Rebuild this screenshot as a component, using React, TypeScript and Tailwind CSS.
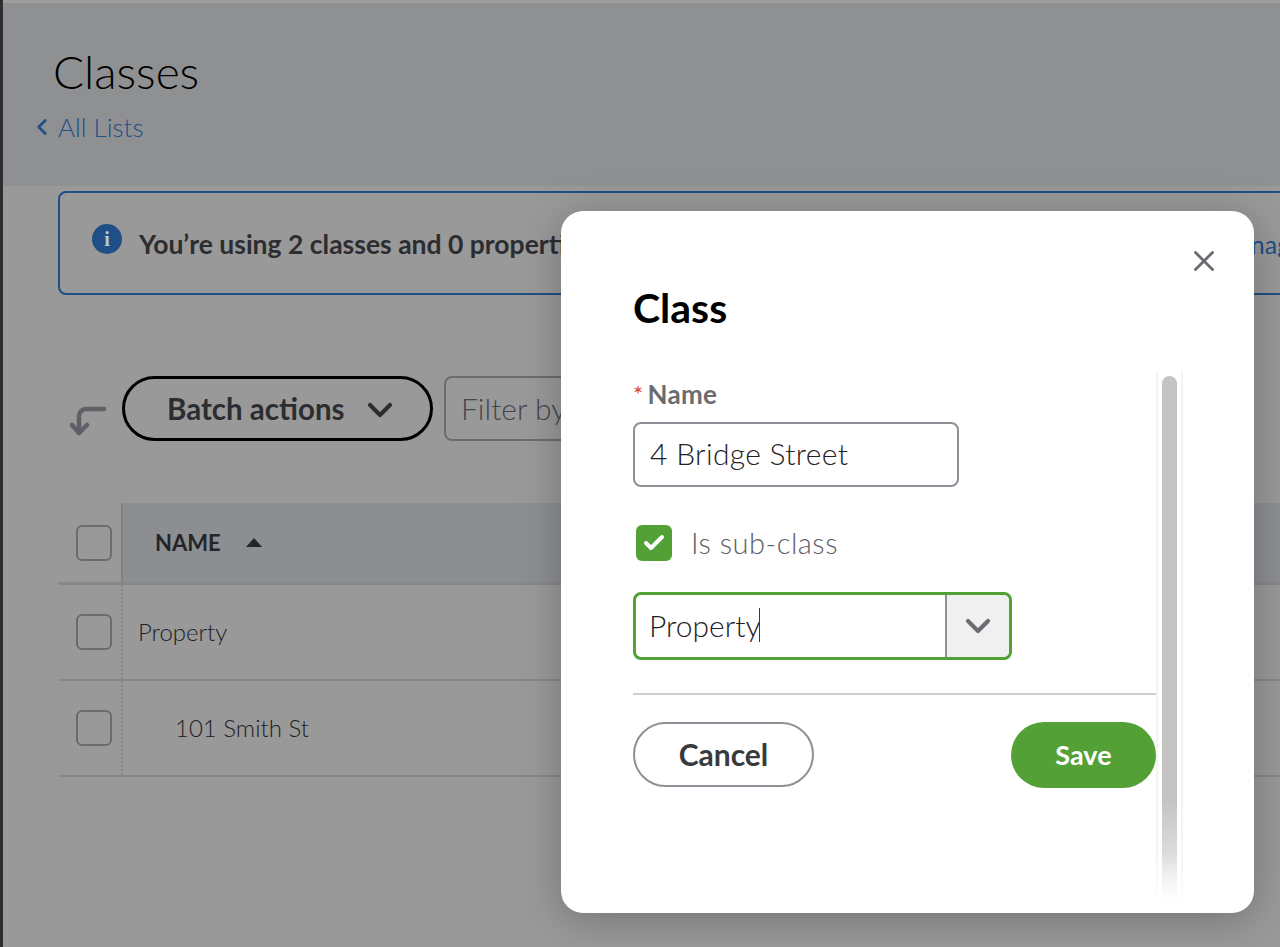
import React from 'react';
import { Check, ChevronDown, ChevronLeft, X } from 'lucide-react';

const Box = () => (
  <div className="w-9 h-9 rounded-md border-2 border-[#6b6c72] shrink-0"></div>
);

const Row = ({ label, indent }: { label: string; indent: string }) => (
  <div className="flex items-center border-b-2 border-[#87888a] w-[1222px] h-[96px]">
    <div className="w-[65px] h-full flex items-center pl-[18px] border-r-2 border-dotted border-[#808184]">
      <Box />
    </div>
    <span className={`text-[24px] font-light text-[#1f2023] ${indent}`}>{label}</span>
  </div>
);

const ClassModal = () => (
  <div className="absolute left-[558px] top-[211px] w-[693px] h-[702px] bg-white rounded-[22px] shadow-[0_6px_40px_rgba(0,0,0,0.25)] pl-[72px] pr-[70px] flex flex-col">
    <button className="absolute top-[33px] right-[33px] text-[#6b6c72]">
      <X size={34} strokeWidth={2} />
    </button>
    <h2 className="mt-[72px] text-[41px] leading-[50px] font-bold text-black">Class</h2>

    <div className="flex mt-[38px] flex-1 min-h-0 pb-[6px]">
      <div className="w-[523px] shrink-0">
        <label className="flex items-center h-[30px] mt-[8px] text-[26px] tracking-[0.3px] leading-none font-bold text-[#6b6c72]">
          <span className="text-[#d8432b] font-normal mr-[4px] text-[24px] leading-none">*</span>
          Name
        </label>
        <div className="mt-[13px] w-[326px] h-[65px] rounded-lg border-2 border-[#8d9096] flex items-center pl-[15px] pb-[2px] text-[30px] font-light tracking-[0.3px] text-[#1f2023]">
          4 Bridge Street
        </div>

        <div className="flex items-center mt-[38px] ml-[3px] h-[36px]">
          <div className="w-9 h-9 rounded-md bg-[#53a036] flex items-center justify-center">
            <Check size={24} strokeWidth={4} className="text-white" />
          </div>
          <span className="ml-[19px] text-[29px] font-light tracking-[0.5px] text-[#5f6166]">Is sub-class</span>
        </div>

        <div className="mt-[31px] w-[379px] h-[68px] rounded-lg border-[3px] border-[#53a036] flex">
          <div className="flex-1 flex items-center pl-[13px] pb-[2px] text-[30px] font-light text-[#1f2023]">
            Property<span className="w-px h-[34px] bg-[#393a3d] -ml-[2px]"></span>
          </div>
          <div className="w-[64px] border-l-2 border-[#8d9096] bg-[#f0f0f0] rounded-r-md flex items-center justify-center text-[#6b6c72]">
            <ChevronDown size={40} strokeWidth={2.5} />
          </div>
        </div>

        <div className="mt-[33px] border-t-2 border-[#cfcfcf]"></div>

        <div className="flex justify-between mt-[27px]">
          <button className="w-[181px] h-[65px] rounded-full border-2 border-[#8d9096] text-[30px] font-bold text-[#393a3d]">
            Cancel
          </button>
          <button className="w-[145px] h-[66px] rounded-full bg-[#53a036] text-[27px] font-bold text-white">
            Save
          </button>
        </div>
      </div>

      <div className="w-[27px] shrink-0 border-x-2 border-[#f4f4f4] flex justify-center pt-[5px] [mask-image:linear-gradient(to_bottom,black_90%,transparent_100%)]">
        <div className="w-[15px] h-full rounded-full bg-gradient-to-b from-[#c4c4c4] from-[80%] to-[#f4f4f4]"></div>
      </div>
    </div>
  </div>
);

export default function App() {
  return (
    <div className="relative w-[1280px] h-[947px] overflow-hidden bg-[#999999] font-['Lato',sans-serif] border-l-[3px] border-[#2e2e30]">
      <div className="h-[3px] bg-[#9e9e9e]"></div>
      <div className="h-[183px] bg-[#8f9092] pt-[42px] pl-[50px]">
        <h1 className="text-[46px] leading-[54px] font-light text-black">Classes</h1>
        <a className="flex items-center mt-[12px] -ml-[20px] text-[26px] leading-[32px] font-light text-[#1f4f86]">
          <ChevronLeft size={26} strokeWidth={2.5} className="-ml-[4px] mr-[3px]" />
          All Lists
        </a>
      </div>

      <div className="mt-[5px] ml-[55px] w-[1300px] h-[104px] rounded-lg border-2 border-[#1f4f86] flex items-center pl-[32px]">
        <div className="-mt-[8px] w-[30px] h-[30px] rounded-full bg-[#1f4f86] flex items-center justify-center">
          <span className="font-['Liberation_Serif',serif] font-bold text-[20px] text-[#b9c6d6]">i</span>
        </div>
        <span className="ml-[17px] mt-[3px] text-[26.5px] font-bold text-[#2c2d30] whitespace-nowrap">
          You’re using 2 classes and 0 properties
        </span>
        <a className="ml-[624px] mt-[3px] text-[25px] font-normal text-[#1f4f86]">Manage</a>
      </div>

      <div className="flex items-center mt-[81px] ml-[67px]">
        <svg width="36" height="30" viewBox="0 0 36 30" fill="none" className="mt-[24px] stroke-[#5f6066]" strokeWidth="4.5" strokeLinecap="round" strokeLinejoin="round">
          <path d="M34 3H16a7 7 0 0 0-7 7v17" />
          <path d="M2 19l7 8 8-8" />
        </svg>
        <button className="ml-[16px] w-[311px] h-[65px] rounded-full border-[3px] border-black flex items-center pl-[42px] pt-[2px] gap-[15px] text-[29.5px] font-bold text-[#2c2d30]">
          Batch actions
          <ChevronDown size={40} strokeWidth={2.5} />
        </button>
        <div className="ml-[11px] w-[300px] h-[65px] rounded-lg border-2 border-[#6b6c72] flex items-center pl-[15px] text-[30px] font-light text-[#45464a]">
          Filter by name
        </div>
      </div>

      <div className="mt-[62px] ml-[55px]">
        <div className="flex items-center h-[82px] w-[1222px] border-b-[3px] border-[#87888a]">
          <div className="w-[65px] pl-[18px] h-full flex items-center border-r-2 border-[#808184]">
            <Box />
          </div>
          <div className="flex-1 h-full bg-[#8c8e91] flex items-center pl-[32px] text-[22px] font-bold text-[#242528]">
            NAME
            <svg width="18" height="11" viewBox="0 0 18 11" className="ml-[24px] fill-[#242528]">
              <path d="M9 1 17 10H1z" />
            </svg>
          </div>
        </div>
        <Row label="Property" indent="ml-[15px]" />
        <Row label="101 Smith St" indent="ml-[52px]" />
      </div>

      <ClassModal />
    </div>
  );
}
